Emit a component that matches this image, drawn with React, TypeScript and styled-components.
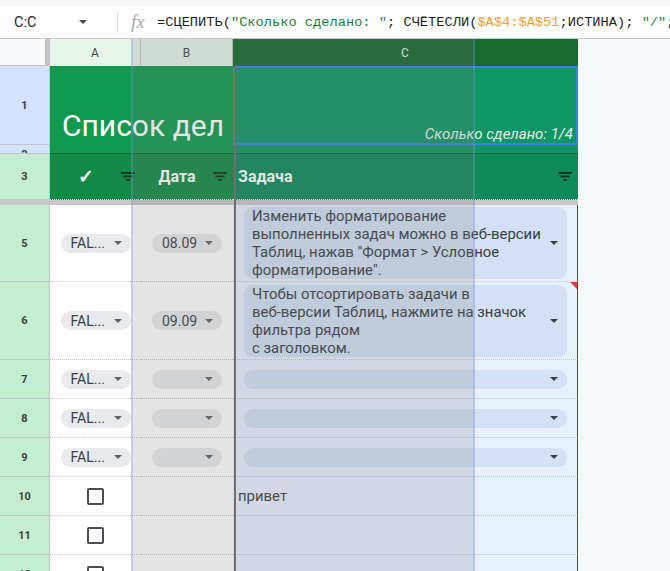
import React from "react";
import styled, { createGlobalStyle } from "styled-components";

const GlobalStyle = createGlobalStyle`
  html, body {
    margin: 0;
    padding: 0;
    background: #fff;
  }
  body {
    font-family: Roboto, "Liberation Sans", Arial, sans-serif;
    overflow: hidden;
  }
`;

// ширины колонок: заголовок строк, A, B, C
const COLS = "50px 91px 92px 345px";

type Tone = "blue" | "green";

export default function App() {
  return (
    <Page>
      <GlobalStyle />
      <TopStrip />
      <FormulaBar>
        <NameBox>
          C:C
          <Caret $color="#444746" />
        </NameBox>
        <BarDivider />
        <Fx>fx</Fx>
        <Formula>
          =СЦЕПИТЬ(<Token $kind="str">"Сколько сделано: "</Token>; СЧЁТЕСЛИ(
          <Token $kind="ref">$A$4:$A$51</Token>;ИСТИНА); <Token $kind="str">"/"</Token>;
        </Formula>
      </FormulaBar>

      <SheetArea>
        <Grid>
          <Row $h={27}>
            <Corner />
            <ColHead>A</ColHead>
            <ColHead>B</ColHead>
            <ColHead $dark>C</ColHead>
          </Row>

          <Row $h={79}>
            <RowNum $tone="blue">1</RowNum>
            <TitleCell>Список дел</TitleCell>
            <CountCell>Сколько сделано: 1/4</CountCell>
          </Row>

          <Row $h={9}>
            <RowNum $tone="blue" $clip>
              2
            </RowNum>
            <GapCell />
            <GapCell $selected />
          </Row>

          <Row $h={46}>
            <RowNum $tone="green">3</RowNum>
            <HeadCell>
              <HeadLabel $align="center" $big>
                ✓
              </HeadLabel>
              <FilterIcon />
            </HeadCell>
            <HeadCell>
              <HeadLabel $align="center">Дата</HeadLabel>
              <FilterIcon />
            </HeadCell>
            <HeadCell $selected>
              <HeadLabel $align="left">Задача</HeadLabel>
              <FilterIcon />
            </HeadCell>
          </Row>

          <FrozenBar />

          <Row $h={77}>
            <RowNum $tone="green">5</RowNum>
            <Cell>
              <Chip>
                FAL...
                <Caret />
              </Chip>
            </Cell>
            <Cell>
              <Chip>
                08.09
                <Caret />
              </Chip>
            </Cell>
            <Cell $selected>
              <TaskChip>
                <TaskText>
                  {`Изменить форматирование\nвыполненных задач можно в веб-версии\nТаблиц, нажав "Формат > Условное\nформатирование".`}
                </TaskText>
                <Caret $color="#3c4043" />
              </TaskChip>
            </Cell>
          </Row>

          <Row $h={78}>
            <RowNum $tone="green">6</RowNum>
            <Cell>
              <Chip>
                FAL...
                <Caret />
              </Chip>
            </Cell>
            <Cell>
              <Chip>
                09.09
                <Caret />
              </Chip>
            </Cell>
            <Cell $selected $note>
              <TaskChip>
                <TaskText>
                  {`Чтобы отсортировать задачи в\nвеб-версии Таблиц, нажмите на значок\nфильтра рядом\nс заголовком.`}
                </TaskText>
                <Caret $color="#3c4043" />
              </TaskChip>
            </Cell>
          </Row>

          {[7, 8, 9].map((n) => (
            <Row $h={39} key={n}>
              <RowNum $tone="green">{n}</RowNum>
              <Cell>
                <Chip>
                  FAL...
                  <Caret />
                </Chip>
              </Cell>
              <Cell>
                <Chip $empty>
                  <Caret />
                </Chip>
              </Cell>
              <Cell $selected>
                <TaskChip $empty>
                  <Caret $color="#3c4043" />
                </TaskChip>
              </Cell>
            </Row>
          ))}

          {[10, 11, 12].map((n) => (
            <Row $h={39} key={n}>
              <RowNum $tone="green">{n}</RowNum>
              <Cell>
                <Checkbox />
              </Cell>
              <Cell />
              <Cell $selected>{n === 10 && <PlainText>привет</PlainText>}</Cell>
            </Row>
          ))}
        </Grid>

        {/* перетаскиваемая колонка и линия вставки */}
        <DragGhost />
        <DropLine />
      </SheetArea>
    </Page>
  );
}

const FilterIcon = () => (
  <FilterSvg width="14" height="9" viewBox="0 0 14 9">
    <rect x="0" y="0" width="14" height="1.8" />
    <rect x="2.5" y="3.5" width="9" height="1.8" />
    <rect x="5" y="7" width="4" height="1.8" />
  </FilterSvg>
);

const Page = styled.div`
  height: 100vh;
  display: flex;
  flex-direction: column;
  overflow: hidden;
`;

const TopStrip = styled.div`
  height: 6px;
  background: #f5f6f7;
  flex: none;
`;

const FormulaBar = styled.div`
  height: 32px;
  flex: none;
  display: flex;
  align-items: center;
  border-bottom: 1px solid #c7c7c7;
  background: #fff;
  white-space: nowrap;
  overflow: hidden;
  & > * {
    flex: none;
  }
`;

const NameBox = styled.div`
  width: 103px;
  padding-left: 14px;
  padding-right: 16px;
  box-sizing: border-box;
  display: flex;
  align-items: center;
  justify-content: space-between;
  font-size: 14.5px;
  color: #1f1f1f;
`;

const BarDivider = styled.div`
  width: 1px;
  height: 20px;
  background: #dadce0;
  margin-left: 14px;
`;

const Fx = styled.span`
  margin-left: 13px;
  width: 26px;
  font-family: "Liberation Serif", serif;
  font-style: italic;
  font-size: 19px;
  color: #a3a7ab;
`;

const Formula = styled.div`
  font-family: "Liberation Mono", "DejaVu Sans Mono", monospace;
  font-size: 13.7px;
  color: #1f1f1f;
`;

const Token = styled.span<{ $kind: "str" | "ref" }>`
  color: ${(p) => (p.$kind === "str" ? "#188038" : "#f39c2b")};
`;

const Caret = styled.span<{ $color?: string }>`
  flex: none;
  width: 0;
  height: 0;
  border-left: 4px solid transparent;
  border-right: 4px solid transparent;
  border-top: 4px solid ${(p) => p.$color ?? "#5f6368"};
`;

const SheetArea = styled.div`
  flex: 1;
  position: relative;
  overflow: hidden;
  background: #f8f9fa;
`;

const Grid = styled.div`
  width: 578px;
  display: flex;
  flex-direction: column;
`;

const Row = styled.div<{ $h: number }>`
  display: grid;
  grid-template-columns: ${COLS};
  height: ${(p) => p.$h}px;
  flex: none;
  & > * {
    box-sizing: border-box;
    min-width: 0;
  }
`;

const Corner = styled.div`
  background: #f8f9fa;
  border-right: 5px solid #c4c4c4;
  border-bottom: 1px solid #c4c4c4;
`;

const ColHead = styled.div<{ $dark?: boolean }>`
  display: flex;
  align-items: center;
  justify-content: center;
  font-size: 12px;
  background: ${(p) => (p.$dark ? "#166b30" : "#e6f4ea")};
  color: ${(p) => (p.$dark ? "#dfeee4" : "#444746")};
  border-right: 1px solid ${(p) => (p.$dark ? "#166b30" : "#c4c7c5")};
`;

const RowNum = styled.div<{ $tone: Tone; $clip?: boolean }>`
  display: flex;
  align-items: ${(p) => (p.$clip ? "flex-start" : "center")};
  justify-content: center;
  padding-top: ${(p) => (p.$clip ? "3px" : "0")};
  overflow: hidden;
  font-size: 11px;
  line-height: 13px;
  font-weight: 700;
  color: #3c4043;
  background: ${(p) => (p.$tone === "blue" ? "#d3e3fd" : "#c4eed0")};
  border-right: 1px solid #c4c4c4;
  border-bottom: 1px solid #c4c4c4;
`;

const TitleCell = styled.div`
  grid-column: span 2;
  display: flex;
  align-items: flex-end;
  padding: 0 0 3px 12px;
  background: #109a50;
  color: #fff;
  font-size: 30px;
  line-height: 33px;
  white-space: nowrap;
`;

const CountCell = styled.div`
  display: flex;
  align-items: flex-end;
  justify-content: flex-end;
  padding: 0 3px 0 0;
  background: #0f9566;
  border: 2px solid #3d7ee8;
  color: #e3f2ea;
  font-size: 15px;
  line-height: 18px;
  font-style: italic;
  white-space: nowrap;
`;

const GapCell = styled.div<{ $selected?: boolean }>`
  grid-column: ${(p) => (p.$selected ? "auto" : "span 2")};
  background: ${(p) => (p.$selected ? "#0f9566" : "#109a50")};
  border-bottom: 1px solid #0b6e36;
`;

const HeadCell = styled.div<{ $selected?: boolean }>`
  display: flex;
  align-items: center;
  padding: 0 6px 0 ${(p) => (p.$selected ? "5px" : "0")};
  background: ${(p) => (p.$selected ? "#0f8a5b" : "#118a45")};
  border-bottom: 1px dotted #f2f2f2;
`;

const HeadLabel = styled.span<{ $align: "left" | "center"; $big?: boolean }>`
  flex: 1;
  text-align: ${(p) => p.$align};
  color: #fff;
  font-weight: 700;
  font-size: ${(p) => (p.$big ? "19px" : "16px")};
  white-space: nowrap;
`;

const FilterSvg = styled.svg`
  flex: none;
  fill: #14301f;
`;

const FrozenBar = styled.div`
  height: 5px;
  flex: none;
  background: #c9c9c9;
`;

const Cell = styled.div<{ $selected?: boolean; $note?: boolean }>`
  position: relative;
  display: flex;
  align-items: center;
  justify-content: center;
  background: ${(p) => (p.$selected ? "#e8f0fe" : "#fff")};
  border-bottom: 1px dotted #c4c7c5;
  border-right: ${(p) => (p.$selected ? "1px solid #0d6e31" : "none")};

  ${(p) =>
    p.$note &&
    `
    &::after {
      content: "";
      position: absolute;
      top: 0;
      right: 0;
      border-top: 7px solid #e5393b;
      border-left: 7px solid transparent;
    }
  `}
`;

const Chip = styled.div<{ $empty?: boolean }>`
  width: 70px;
  height: 19px;
  box-sizing: border-box;
  display: flex;
  align-items: center;
  justify-content: ${(p) => (p.$empty ? "flex-end" : "space-between")};
  padding: 0 9px 0 10px;
  border-radius: 10px;
  background: #e8eaed;
  color: #3c4043;
  font-size: 14px;
`;

const TaskChip = styled.div<{ $empty?: boolean }>`
  width: 323px;
  margin-left: 1px;
  min-height: 19px;
  box-sizing: border-box;
  display: flex;
  align-items: center;
  justify-content: ${(p) => (p.$empty ? "flex-end" : "space-between")};
  padding: 0 9px 0 8px;
  border-radius: 9px;
  background: #d3e0f5;
`;

const TaskText = styled.div`
  white-space: pre-line;
  font-size: 14.9px;
  line-height: 18px;
  color: #3c4043;
`;

const PlainText = styled.span`
  flex: 1;
  padding-left: 5px;
  font-size: 14.9px;
  color: #3c4043;
`;

const Checkbox = styled.span`
  width: 17px;
  height: 17px;
  box-sizing: border-box;
  border: 2px solid #4a4d51;
  border-radius: 2px;
`;

const DragGhost = styled.div`
  position: absolute;
  top: 0;
  bottom: 0;
  left: 131px;
  width: 344px;
  box-sizing: border-box;
  background: rgba(119, 119, 119, 0.2);
  border-left: 2px solid rgba(120, 160, 240, 0.3);
  border-right: 2px solid rgba(120, 160, 240, 0.3);
  pointer-events: none;
`;

const DropLine = styled.div`
  position: absolute;
  top: 27px;
  bottom: 0;
  left: 234px;
  width: 2px;
  background: #6f6f6f;
`;
